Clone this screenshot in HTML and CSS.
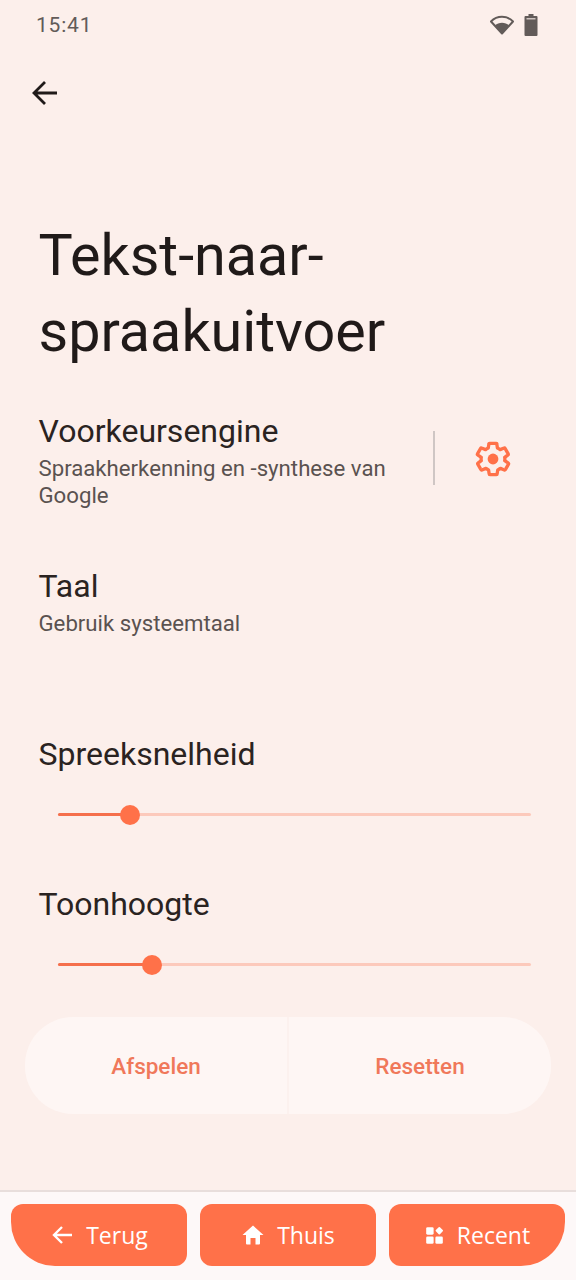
FILE: index.html
```html
<!DOCTYPE html>
<html lang="nl">
<head>
<meta charset="utf-8">
<title>Tekst-naar-spraakuitvoer</title>
<link rel="stylesheet" href="styles.css">
</head>
<body>
<div class="screen">
  <header class="status">
    <span class="time">15:41</span>
    <span class="status-icons">
      <svg class="wifi" viewBox="0 0 24 20"><path d="M12 18.500 1 6.500C4 3.400 7.800 1.800 12 1.800S20 3.400 23 6.500Z" fill="none" stroke="#625b59" stroke-width="2" stroke-linejoin="round"/><path d="M12 18 5 10.300C6.900 8.700 9.300 7.800 12 7.800s5.100.9 7 2.500Z" fill="#625b59"/></svg>
      <svg class="battery" viewBox="0 0 14 22"><path d="M4.500 0h5v2H12.500a1 1 0 0 1 1 1v18a1 1 0 0 1-1 1h-11a1 1 0 0 1-1-1V3a1 1 0 0 1 1-1h3Z" fill="#625b59"/><rect x="2.500" y="4" width="9" height="1.500" fill="#fcefeb" opacity=".7"/></svg>
    </span>
  </header>
  <div class="toolbar">
    <svg class="back" viewBox="0 0 28 28"><path d="M26 14H4M14 3 3 14l11 11" fill="none" stroke="#201a19" stroke-width="2.800"/></svg>
  </div>
  <h1 class="title">Tekst-naar-<br>spraakuitvoer</h1>
  <section class="pref engine">
    <div class="pref-text">
      <h2>Voorkeursengine</h2>
      <p>Spraakherkenning en -synthese van Google</p>
    </div>
    <div class="pref-action">
      <svg class="gear" viewBox="0 0 24 24"><path d="M19.400 13c.1-.300.100-.700.100-1s0-.700-.100-1l2.100-1.600c.2-.1.200-.4.100-.6l-2-3.500c-.1-.2-.4-.3-.6-.2l-2.500 1c-.5-.4-1.100-.7-1.700-1l-.4-2.600c0-.3-.2-.4-.5-.4h-4c-.2 0-.5.100-.5.400l-.4 2.600c-.6.300-1.200.6-1.700 1l-2.500-1c-.2-.1-.5 0-.6.200l-2 3.500c-.1.200-.1.500.1.600L4.600 11c-.1.300-.1.700-.1 1s0 .7.100 1l-2.100 1.600c-.2.100-.2.400-.1.600l2 3.500c.1.200.4.300.6.200l2.500-1c.5.400 1.100.7 1.700 1l.4 2.600c0 .3.300.4.500.4h4c.3 0 .5-.1.500-.4l.4-2.600c.6-.3 1.200-.6 1.700-1l2.500 1c.2.100.5 0 .6-.2l2-3.500c.1-.2.100-.5-.1-.6Z" fill="none" stroke="#ff7149" stroke-width="2.100" stroke-linejoin="round"/><circle cx="12" cy="12" r="3.400" fill="#ff7149"/></svg>
    </div>
  </section>
  <section class="pref language">
    <div class="pref-text">
      <h2>Taal</h2>
      <p>Gebruik systeemtaal</p>
    </div>
  </section>
  <section class="slider-block rate">
    <h2>Spreeksnelheid</h2>
    <div class="slider">
      <div class="track"><div class="fill" style="width:15.200%"></div><div class="thumb" style="left:15.200%"></div></div>
    </div>
  </section>
  <section class="slider-block pitch">
    <h2>Toonhoogte</h2>
    <div class="slider">
      <div class="track"><div class="fill" style="width:19.900%"></div><div class="thumb" style="left:19.900%"></div></div>
    </div>
  </section>
  <div class="actions">
    <button class="action">Afspelen</button>
    <button class="action">Resetten</button>
  </div>
  <nav class="bottom">
    <button class="nav-btn left">
      <svg viewBox="0 0 24 24"><path d="M22 12H5M12 4 4 12l8 8" fill="none" stroke="#fff" stroke-width="2.400"/></svg>
      <span>Terug</span>
    </button>
    <button class="nav-btn">
      <svg viewBox="0 0 24 24"><path d="M12 2.500 1.500 12H5v8.500a1 1 0 0 0 1 1h3.500V15h5v6.500H18a1 1 0 0 0 1-1V12h3.500Z" fill="#fff"/></svg>
      <span>Thuis</span>
    </button>
    <button class="nav-btn right">
      <svg class="small" viewBox="0 0 24 24"><rect x="2.500" y="2.500" width="8.500" height="8.500" rx="1.500" fill="#fff"/><rect x="2.500" y="13" width="8.500" height="8.500" rx="1.500" fill="#fff"/><rect x="13" y="13" width="8.500" height="8.500" rx="1.500" fill="#fff"/><rect x="14.200" y="3.200" width="6.600" height="6.600" rx="1" transform="rotate(45 17.500 6.500)" fill="#fff"/></svg>
      <span>Recent</span>
    </button>
  </nav>
</div>
</body>
</html>
```

FILE: styles.css
```css
* { box-sizing: border-box; }
html, body { margin: 0; padding: 0; }
body { background: #fcefeb; font-family: Roboto, sans-serif; color: #201a19; }
.screen { width: 576px; height: 1280px; display: flex; flex-direction: column; overflow: hidden; }
.status { height: 50px; padding: 0 38px 0 36px; display: flex; align-items: center; justify-content: space-between; }
.time { font-size: 21px; letter-spacing: .8px; color: #625b59; }
.status-icons { display: flex; align-items: center; gap: 10px; }
.wifi { width: 24px; height: 20px; display: block; }
.battery { width: 14px; height: 22px; display: block; }
.toolbar { height: 86px; padding: 29px 0 0 31px; display: flex; align-items: flex-start; }
.back { width: 28px; height: 28px; display: block; }
.title { margin: 0; padding: 82px 38.500px 0; font-size: 57.500px; line-height: 76px; font-weight: 400; height: 266px; }
h2 { margin: 0; font-size: 32px; line-height: 40px; font-weight: 400; color: #2a2321; }
.pref { display: flex; padding: 0 0 0 38.500px; }
.pref p { margin: 4px 0 0; font-size: 22.200px; line-height: 27px; color: #5a5250; }
.engine { height: 156px; padding-top: 9px; }
.engine .pref-text { width: 394.500px; }
.pref-action { margin-top: 20px; height: 54px; border-left: 2px solid #cfc6c4; flex: 1; display: flex; align-items: center; padding: 2px 0 0 39px; }
.gear { width: 38px; height: 38px; display: block; }
.language { height: 176px; padding-top: 8px; }
.slider-block { padding: 0 0 0 38.500px; }
.rate { height: 150px; }
.pitch { height: 133px; }
.slider { padding: 0 45px 0 19.500px; margin-top: 39px; }
.track { position: relative; height: 3px; border-radius: 2px; background: #fcc9bb; }
.fill { height: 3px; border-radius: 2px; background: #f56f4c; }
.thumb { position: absolute; top: 1.500px; width: 20px; height: 20px; margin: -10px 0 0 -10px; border-radius: 50%; background: #ff7149; }
.actions { margin: 0 25px; height: 97px; display: flex; border-radius: 48px; overflow: hidden; gap: 2px; background: #fcf1ee; }
.action { flex: 1; border: 0; background: #fef6f4; font: 500 22.500px Roboto, sans-serif; color: #f0785a; padding: 0; }
.bottom { margin-top: 76px; flex: 1; background: #fdf8f8; border-top: 2px solid #e8dedc; display: flex; gap: 13px; padding: 12px 11px 0; }
.nav-btn { flex: 1; height: 62px; border: 0; border-radius: 12px; background: #ff7149; color: #fff; display: flex; align-items: center; justify-content: center; gap: 12px; font: 500 23px "Open Sans", sans-serif; padding: 0; }
.nav-btn svg { width: 24px; height: 24px; display: block; }
.nav-btn svg.small { width: 21px; height: 21px; }
.nav-btn.left { border-bottom-left-radius: 44px; }
.nav-btn.right { border-bottom-right-radius: 44px; }
```
